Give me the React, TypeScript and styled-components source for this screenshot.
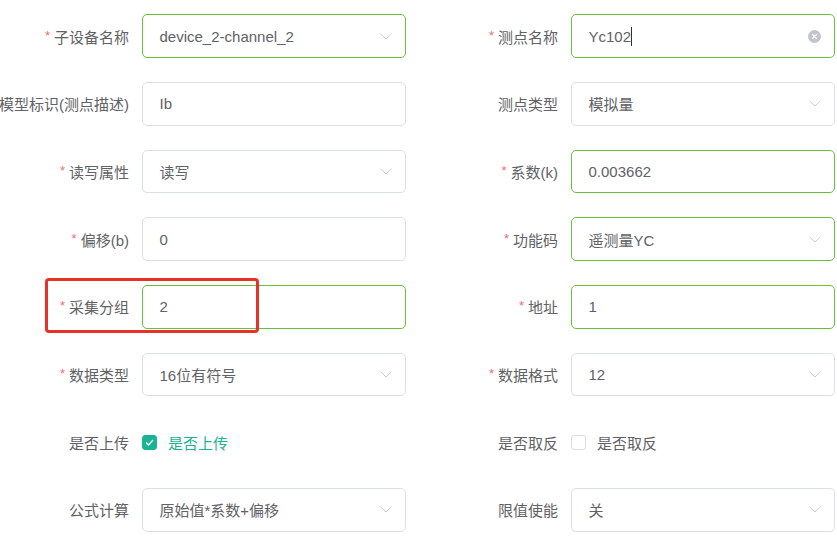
import React from "react";
import styled, { createGlobalStyle } from "styled-components";

const Global = createGlobalStyle`
  html, body { margin: 0; padding: 0; background: #fff; overflow: hidden; }
  body { font-family: "Liberation Sans", "Noto Sans CJK SC", sans-serif; }
`;

const Form = styled.div`
  display: grid;
  grid-template-columns: repeat(2, 406px);
  grid-auto-rows: 43.67px;
  align-content: start;
  column-gap: 23px;
  row-gap: 24px;
  padding-top: 14.3px;
  width: 837px;
  height: 539px;
  box-sizing: border-box;
`;

const Item = styled.div`
  position: relative;
  display: flex;
  align-items: center;
  height: 43.67px;
`;

const Label = styled.div`
  width: 142px;
  flex: none;
  box-sizing: border-box;
  padding-right: 13px;
  display: flex;
  justify-content: flex-end;
  align-items: center;
  white-space: nowrap;
  font-size: 15px;
  color: #606266;
`;

const Star = styled.span`
  color: #f56c6c;
  font-size: 13px;
  margin-right: 4px;
  position: relative;
  top: -1px;
`;

const Box = styled.div<{ $ok?: boolean }>`
  width: 264.5px;
  height: 43.67px;
  box-sizing: border-box;
  border: 1px solid ${(p) => (p.$ok ? "#67c23a" : "#dcdfe6")};
  border-radius: 5px;
  display: flex;
  align-items: center;
  padding: 0 13.5px 0 16.5px;
  font-size: 15px;
  color: #606266;
  background: #fff;
`;

const Value = styled.span`
  flex: 1;
  white-space: nowrap;
`;

const Caret = styled.span`
  display: inline-block;
  width: 1px;
  height: 19px;
  background: #303133;
  vertical-align: -4px;
`;

const Chevron = () => (
  <svg width="12" height="7" viewBox="0 0 12 7">
    <path d="M0.5 0.8 L6 6 L11.5 0.8" fill="none" stroke="#c8ccd3" strokeWidth="1" />
  </svg>
);

const Clear = () => (
  <svg width="13" height="13" viewBox="0 0 13 13">
    <circle cx="6.5" cy="6.5" r="6.5" fill="#c0c4cc" />
    <path d="M4.3 4.3 L8.7 8.7 M8.7 4.3 L4.3 8.7" stroke="#fff" strokeWidth="1.3" />
  </svg>
);

const CheckGroup = styled.label`
  display: flex;
  align-items: center;
  gap: 11px;
  font-size: 15px;
`;

const CheckSquare = styled.span<{ $on?: boolean }>`
  width: 15px;
  height: 15px;
  box-sizing: border-box;
  border-radius: 3px;
  border: 1px solid ${(p) => (p.$on ? "#1ab394" : "#dcdfe6")};
  background: ${(p) => (p.$on ? "#1ab394" : "#fff")};
  display: flex;
  align-items: center;
  justify-content: center;
`;

const CheckText = styled.span<{ $on?: boolean }>`
  color: ${(p) => (p.$on ? "#1ab394" : "#606266")};
`;

const Highlight = styled.div`
  position: absolute;
  left: 44.5px;
  top: -7px;
  width: 214.5px;
  height: 55px;
  box-sizing: border-box;
  border: 3px solid #e8312b;
  border-radius: 4px;
  pointer-events: none;
`;

type Field = {
  label: string;
  req?: boolean;
  value?: string;
  kind: "input" | "select" | "check";
  ok?: boolean;
  on?: boolean;
  clear?: boolean;
  highlight?: boolean;
};

const fields: Field[] = [
  { label: "子设备名称", req: true, value: "device_2-channel_2", kind: "select", ok: true },
  { label: "测点名称", req: true, value: "Yc102", kind: "input", ok: true, clear: true },
  { label: "模型标识(测点描述)", value: "Ib", kind: "input" },
  { label: "测点类型", value: "模拟量", kind: "select" },
  { label: "读写属性", req: true, value: "读写", kind: "select" },
  { label: "系数(k)", req: true, value: "0.003662", kind: "input", ok: true },
  { label: "偏移(b)", req: true, value: "0", kind: "input" },
  { label: "功能码", req: true, value: "遥测量YC", kind: "select", ok: true },
  { label: "采集分组", req: true, value: "2", kind: "input", ok: true, highlight: true },
  { label: "地址", req: true, value: "1", kind: "input", ok: true },
  { label: "数据类型", req: true, value: "16位有符号", kind: "select" },
  { label: "数据格式", req: true, value: "12", kind: "select" },
  { label: "是否上传", value: "是否上传", kind: "check", on: true },
  { label: "是否取反", value: "是否取反", kind: "check" },
  { label: "公式计算", value: "原始值*系数+偏移", kind: "select" },
  { label: "限值使能", value: "关", kind: "select" },
];

export default function App() {
  return (
    <>
      <Global />
      <Form>
        {fields.map((f) => (
          <Item key={f.label}>
            <Label>
              {f.req && <Star>*</Star>}
              {f.label}
            </Label>
            {f.kind === "check" ? (
              <CheckGroup>
                <CheckSquare $on={f.on}>
                  {f.on && (
                    <svg width="9" height="7" viewBox="0 0 9 7">
                      <path d="M1 3.5 L3.5 6 L8 1" fill="none" stroke="#fff" strokeWidth="1.3" />
                    </svg>
                  )}
                </CheckSquare>
                <CheckText $on={f.on}>{f.value}</CheckText>
              </CheckGroup>
            ) : (
              <Box $ok={f.ok}>
                <Value>
                  {f.value}
                  {f.clear && <Caret />}
                </Value>
                {f.kind === "select" && <Chevron />}
                {f.clear && <Clear />}
              </Box>
            )}
            {f.highlight && <Highlight />}
          </Item>
        ))}
      </Form>
    </>
  );
}
